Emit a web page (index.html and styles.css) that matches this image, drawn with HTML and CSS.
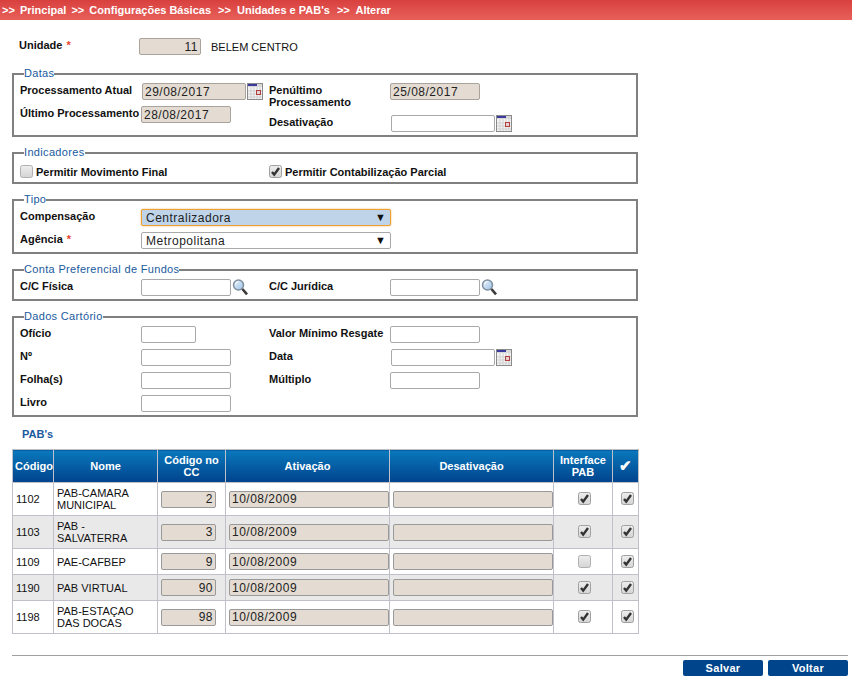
FILE: index.html
```html
<!DOCTYPE html>
<html lang="en">
<head>
    <meta charset="UTF-8">
    <meta name="viewport" content="width=device-width, initial-scale=1.0">
    <title>Alterar Unidade</title>
    <link rel="stylesheet" href="styles.css">
</head>
<body>
    <svg class="defs" width="0" height="0">
        <defs>
            <linearGradient id="boxfill" x1="0" y1="0" x2="0" y2="1">
                <stop offset="0" stop-color="#eeeeee"/>
                <stop offset="1" stop-color="#d4d4d4"/>
            </linearGradient>
            <linearGradient id="lens" x1="0" y1="0" x2="1" y2="1">
                <stop offset="0" stop-color="#eaf3fc"/>
                <stop offset="1" stop-color="#9cc2e8"/>
            </linearGradient>
        </defs>
        <symbol id="cal" viewBox="0 0 16 17">
            <rect x="0.5" y="0.5" width="15" height="16" fill="#f4f4f4" stroke="#8a8a8a"/>
            <rect x="1" y="1" width="14" height="3" fill="#d8d8d8"/>
            <rect x="1" y="1" width="9" height="2" fill="#3b3b9c"/>
            <path d="M1 8h14M1 11h14M1 14h14M4 4v12M7 4v12M10 4v12M13 4v12" stroke="#cfcfcf" stroke-width="1" fill="none"/>
            <rect x="9.5" y="7.5" width="4" height="4" fill="#e8d0d0" stroke="#b04040"/>
        </symbol>
        <symbol id="lupa" viewBox="0 0 16 17">
            <circle cx="6.5" cy="6" r="5" fill="url(#lens)" stroke="#7f8f9f" stroke-width="1.5"/>
            <path d="M3.5 5.5a3.2 3.2 0 0 1 3-3" stroke="#fff" fill="none"/>
            <path d="M10.4 10l4.6 5.4" stroke="#3c3c3c" stroke-width="2.6"/>
        </symbol>
        <symbol id="box" viewBox="0 0 13 13">
            <rect x="0.5" y="0.5" width="12" height="12" rx="2" fill="url(#boxfill)" stroke="#b0b0b0"/>
        </symbol>
        <symbol id="tick" viewBox="0 0 13 13">
            <rect x="0.5" y="0.5" width="12" height="12" rx="2" fill="url(#boxfill)" stroke="#a0a0a0"/>
            <path d="M3 7l2.2 2.6L10 3" stroke="#333" stroke-width="2.4" fill="none"/>
        </symbol>
    </svg>

    <div class="crumbs"><span class="sep">&gt;&gt;</span> Principal <span class="sep">&gt;&gt;</span> Configurações Básicas <span class="sep sep-wide">&gt;&gt;</span> Unidades e PAB's <span class="sep sep-wide">&gt;&gt;</span> Alterar</div>

    <div class="content">
        <div class="unidade">
            <label class="lbl lbl-unit">Unidade <span class="req">*</span></label>
            <input class="inp ro num w62" value="11" readonly>
            <span class="unit-name">BELEM CENTRO</span>
        </div>

        <fieldset class="box box-datas">
            <legend>Datas</legend>
            <div class="cols">
                <div class="col">
                    <div class="row">
                        <label class="lbl">Processamento Atual</label>
                        <input class="inp ro w104 nudge" value="29/08/2017" readonly>
                        <svg class="ico-cal"><use href="#cal"/></svg>
                    </div>
                    <div class="row">
                        <label class="lbl lbl-wide">Último Processamento</label>
                        <input class="inp ro w90" value="28/08/2017" readonly>
                    </div>
                </div>
                <div class="col">
                    <div class="row row-tall">
                        <label class="lbl">Penúltimo Processamento</label>
                        <input class="inp ro w90" value="25/08/2017" readonly>
                    </div>
                    <div class="row">
                        <label class="lbl">Desativação</label>
                        <input class="inp w104 nudge">
                        <svg class="ico-cal"><use href="#cal"/></svg>
                    </div>
                </div>
            </div>
        </fieldset>

        <fieldset class="box box-ind">
            <legend>Indicadores</legend>
            <div class="cols">
                <div class="col check-line">
                    <svg class="chk"><use href="#box"/></svg>
                    <label class="lbl lbl-free">Permitir Movimento Final</label>
                </div>
                <div class="col check-line">
                    <svg class="chk"><use href="#tick"/></svg>
                    <label class="lbl lbl-free">Permitir Contabilização Parcial</label>
                </div>
            </div>
        </fieldset>

        <fieldset class="box">
            <legend>Tipo</legend>
            <div class="row">
                <label class="lbl">Compensação</label>
                <div class="sel sel-focus">Centralizadora<span class="arrow">▼</span></div>
            </div>
            <div class="row">
                <label class="lbl">Agência <span class="req">*</span></label>
                <div class="sel">Metropolitana<span class="arrow">▼</span></div>
            </div>
        </fieldset>

        <fieldset class="box">
            <legend>Conta Preferencial de Fundos</legend>
            <div class="cols">
                <div class="col">
                    <div class="row">
                        <label class="lbl">C/C Física</label>
                        <input class="inp w90">
                        <svg class="ico-lupa"><use href="#lupa"/></svg>
                    </div>
                </div>
                <div class="col">
                    <div class="row">
                        <label class="lbl">C/C Jurídica</label>
                        <input class="inp w90">
                        <svg class="ico-lupa"><use href="#lupa"/></svg>
                    </div>
                </div>
            </div>
        </fieldset>

        <fieldset class="box">
            <legend>Dados Cartório</legend>
            <div class="cols">
                <div class="col">
                    <div class="row"><label class="lbl">Ofício</label><input class="inp w55"></div>
                    <div class="row"><label class="lbl">Nº</label><input class="inp w90"></div>
                    <div class="row"><label class="lbl">Folha(s)</label><input class="inp w90"></div>
                    <div class="row"><label class="lbl">Livro</label><input class="inp w90"></div>
                </div>
                <div class="col">
                    <div class="row"><label class="lbl lbl-wide">Valor Mínimo Resgate</label><input class="inp w90"></div>
                    <div class="row">
                        <label class="lbl">Data</label>
                        <input class="inp w104 nudge">
                        <svg class="ico-cal"><use href="#cal"/></svg>
                    </div>
                    <div class="row"><label class="lbl">Múltiplo</label><input class="inp w90"></div>
                </div>
            </div>
        </fieldset>

        <div class="pab-title">PAB's</div>

        <table class="grid">
            <colgroup>
                <col class="c1"><col class="c2"><col class="c3"><col class="c4"><col class="c5"><col class="c6"><col class="c7">
            </colgroup>
            <thead>
                <tr>
                    <th>Código</th>
                    <th>Nome</th>
                    <th>Código no CC</th>
                    <th>Ativação</th>
                    <th>Desativação</th>
                    <th>Interface PAB</th>
                    <th class="th-check">✔</th>
                </tr>
            </thead>
            <tbody>
                <tr class="tall">
                    <td>1102</td>
                    <td>PAB-CAMARA MUNICIPAL</td>
                    <td><input class="inp ro num w55" value="2" readonly></td>
                    <td><input class="inp ro w160" value="10/08/2009" readonly></td>
                    <td><input class="inp ro w160" readonly></td>
                    <td class="mid"><svg class="chk"><use href="#tick"/></svg></td>
                    <td class="mid"><svg class="chk"><use href="#tick"/></svg></td>
                </tr>
                <tr class="tall alt">
                    <td>1103</td>
                    <td>PAB - SALVATERRA</td>
                    <td><input class="inp ro num w55" value="3" readonly></td>
                    <td><input class="inp ro w160" value="10/08/2009" readonly></td>
                    <td><input class="inp ro w160" readonly></td>
                    <td class="mid"><svg class="chk"><use href="#tick"/></svg></td>
                    <td class="mid"><svg class="chk"><use href="#tick"/></svg></td>
                </tr>
                <tr class="short">
                    <td>1109</td>
                    <td>PAE-CAFBEP</td>
                    <td><input class="inp ro num w55" value="9" readonly></td>
                    <td><input class="inp ro w160" value="10/08/2009" readonly></td>
                    <td><input class="inp ro w160" readonly></td>
                    <td class="mid"><svg class="chk"><use href="#box"/></svg></td>
                    <td class="mid"><svg class="chk"><use href="#tick"/></svg></td>
                </tr>
                <tr class="short alt">
                    <td>1190</td>
                    <td>PAB VIRTUAL</td>
                    <td><input class="inp ro num w55" value="90" readonly></td>
                    <td><input class="inp ro w160" value="10/08/2009" readonly></td>
                    <td><input class="inp ro w160" readonly></td>
                    <td class="mid"><svg class="chk"><use href="#tick"/></svg></td>
                    <td class="mid"><svg class="chk"><use href="#tick"/></svg></td>
                </tr>
                <tr class="tall">
                    <td>1198</td>
                    <td>PAB-ESTAÇAO DAS DOCAS</td>
                    <td><input class="inp ro num w55" value="98" readonly></td>
                    <td><input class="inp ro w160" value="10/08/2009" readonly></td>
                    <td><input class="inp ro w160" readonly></td>
                    <td class="mid"><svg class="chk"><use href="#tick"/></svg></td>
                    <td class="mid"><svg class="chk"><use href="#tick"/></svg></td>
                </tr>
            </tbody>
        </table>

        <div class="actions">
            <button class="btn" type="button">Salvar</button>
            <button class="btn" type="button">Voltar</button>
        </div>
    </div>
</body>
</html>
```

FILE: styles.css
```css
* {
    box-sizing: border-box;
    margin: 0;
    padding: 0;
}

html, body {
    height: 682px;
    overflow: hidden;
}

body {
    font-family: "Liberation Sans", Arial, sans-serif;
    font-size: 11px;
    background-color: white;
    color: #111;
}

.defs {
    position: absolute;
}

.crumbs {
    height: 20px;
    line-height: 20px;
    padding-left: 2px;
    font-weight: bold;
    font-size: 11px;
    color: white;
    background: linear-gradient(#d8403e, #e8605a);
}

.sep {
    margin: 0 2px 0 2px;
}

.crumbs .sep:first-child {
    margin-left: 0;
}

.sep-wide {
    margin-left: 4px;
    margin-right: 3px;
}

.content {
    padding: 0 4px 0 12px;
}

.unidade {
    display: flex;
    align-items: center;
    height: 17px;
    margin: 18px 0 12px;
}

.lbl {
    flex: none;
    width: 121px;
    font-weight: bold;
    line-height: 12px;
    margin-top: -3px;
}

.lbl-unit {
    width: 127px;
    padding-left: 7px;
}

.lbl-wide {
    white-space: nowrap;
}

.lbl-free {
    width: auto;
    margin-top: 0;
}

.req {
    color: #e8432e;
    margin-left: 1px;
}

.unit-name {
    margin-left: 10px;
}

.box {
    width: 626px;
    border: 2px solid #808080;
    padding: 0 6px;
    margin-bottom: 9px;
}

.box legend {
    margin-left: 4px;
    padding: 0;
    color: #1a5a9e;
    font-size: 11px;
    letter-spacing: 0.33px;
    line-height: 13px;
}

.cols {
    display: flex;
}

.col {
    width: 249px;
    flex: none;
}

.row {
    display: flex;
    align-items: center;
    height: 23px;
}

.row-tall {
    height: 32px;
    align-items: flex-start;
}

.row-tall .lbl {
    margin-top: 4px;
}

.row-tall .inp {
    margin-top: 3px;
}

.check-line {
    display: flex;
    align-items: center;
    height: 23px;
    padding-top: 3px;
}

.check-line .chk {
    margin-right: 3px;
    margin-top: -2px;
}

.inp {
    height: 17px;
    border: 1px solid #a9a9a9;
    border-radius: 2px;
    padding: 0 2px;
    font-family: "Liberation Sans", Arial, sans-serif;
    font-size: 12px;
    letter-spacing: 0.5px;
    background-color: white;
    color: #222;
    outline: none;
}

.ro {
    background-color: #e4dcd3;
    border-color: #a8a39c;
}

.num {
    text-align: right;
}

.w55 { width: 55px; }
.w62 { width: 62px; }
.w90 { width: 90px; }
.w104 { width: 104px; }
.w160 { width: 160px; }

.nudge {
    margin-left: 1px;
}

.ico-cal {
    width: 16px;
    height: 17px;
    margin-left: 1px;
}

.ico-lupa {
    width: 16px;
    height: 17px;
    margin-left: 1px;
}

.chk {
    width: 13px;
    height: 13px;
    flex: none;
}

.sel {
    position: relative;
    width: 250px;
    height: 17px;
    line-height: 16px;
    border: 1px solid #a9a9a9;
    border-radius: 2px;
    padding-left: 4px;
    font-size: 12px;
    letter-spacing: 0.5px;
    color: #222;
}

.sel-focus {
    background-color: #bfd4e9;
    border-color: #f0a030;
    box-shadow: 0 0 2px #f0b060;
}

.arrow {
    position: absolute;
    right: 4px;
    top: -1px;
    font-size: 11px;
    letter-spacing: 0;
    color: #111;
}

.pab-title {
    color: #1a5a9e;
    font-weight: bold;
    padding-left: 10px;
    line-height: 14px;
    margin: 10px 0 8px;
}

.grid {
    width: 626px;
    table-layout: fixed;
    border-collapse: collapse;
}

.c1 { width: 41px; }
.c2 { width: 104px; }
.c3 { width: 68px; }
.c4 { width: 164px; }
.c5 { width: 164px; }
.c6 { width: 59px; }
.c7 { width: 26px; }

.grid th, .grid td {
    border: 1px solid #c0c0c8;
}

.grid th {
    height: 33px;
    background: linear-gradient(#0a78bc, #00438c);
    color: white;
    font-size: 11px;
    line-height: 12px;
    font-weight: bold;
    padding: 0 2px;
}

.grid .th-check {
    font-size: 15px;
}

.grid td {
    padding: 0 3px;
    line-height: 12px;
    font-size: 11px;
}

.grid td.mid {
    padding: 0 0 0 3px;
    text-align: center;
}

.grid .inp {
    display: block;
    border-color: #999;
}

.tall td { height: 33px; }
.short td { height: 26px; }
.alt td { background-color: #e9e9e9; }

.mid .chk {
    display: inline-block;
    vertical-align: middle;
    margin-top: -3px;
}

.actions {
    display: flex;
    justify-content: flex-end;
    gap: 5px;
    border-top: 1px solid #a0a0a0;
    margin-top: 21px;
    padding-top: 4px;
}

.btn {
    width: 80px;
    height: 16px;
    border: none;
    border-radius: 2px;
    background-color: #00448c;
    color: white;
    font-family: "Liberation Sans", Arial, sans-serif;
    font-size: 11px;
    letter-spacing: 0.3px;
    font-weight: bold;
}
```
